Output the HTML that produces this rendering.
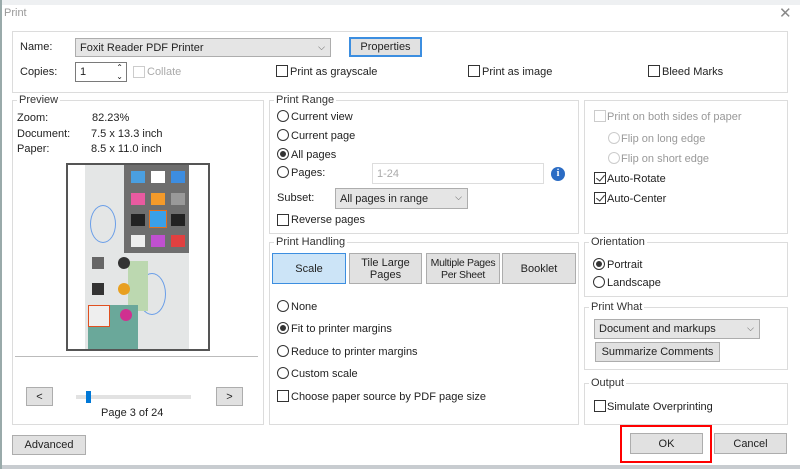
<!DOCTYPE html>
<html><head><style>
*{box-sizing:border-box;margin:0;padding:0}
body{width:800px;height:469px;overflow:hidden;background:#fff;font-family:"Liberation Sans",sans-serif;font-size:11px;color:#222;position:relative}
.a{position:absolute;white-space:nowrap}
.g{position:absolute;border:1px solid #dcdcdc}
.gl{position:absolute;background:#fff;padding:0 2px;font-size:11px;color:#333}
.btn{position:absolute;background:#e1e1e1;border:1px solid #adadad;text-align:center;font-size:11px;color:#222;display:flex;align-items:center;justify-content:center;line-height:12px;white-space:nowrap}
.cb{position:absolute;width:12px;height:12px;border:1px solid #333;background:#fff}
.rb{position:absolute;width:12px;height:12px;border:1px solid #333;border-radius:50%;background:#fff}
.rb.on::after{content:"";position:absolute;left:2px;top:2px;width:6px;height:6px;border-radius:50%;background:#333}
.dis{border-color:#ccc;color:#aaa}
.cmb{position:absolute;background:#e5e5e5;border:1px solid #adadad;padding-left:4px;display:flex;align-items:center}
.chev{position:absolute;right:5px;top:3px;font-size:9px;color:#555}
.chk::after{content:"";position:absolute;left:3px;top:0px;width:4px;height:7px;border:solid #333;border-width:0 1.5px 1.5px 0;transform:rotate(40deg)}
</style></head><body>
<div class="a" style="left:0;top:0;width:800px;height:5px;background:#eef0f2"></div>
<div class="a" style="left:0;top:465px;width:800px;height:4px;background:#c8ccd0"></div>
<div class="a" style="left:0;top:0;width:2px;height:469px;background:#9aa"></div>
<div class="a" style="left:4px;top:7px;color:#999">Print</div>
<div class="a" style="left:779px;top:4px;font-size:15px;color:#888">✕</div>

<div class="g" style="left:12px;top:31px;width:776px;height:62px"></div>
<div class="a" style="left:20px;top:41px">Name:</div>
<div class="cmb" style="left:75px;top:38px;width:256px;height:19px">Foxit Reader PDF Printer<span class="chev">⌵</span></div>
<div class="btn" style="left:349px;top:37px;width:73px;height:20px;border:2px solid #3c8ee0">Properties</div>
<div class="a" style="left:20px;top:66px">Copies:</div>
<div class="a" style="left:75px;top:62px;width:52px;height:20px;border:1px solid #7a7a7a;padding:3px 4px">1<span style="position:absolute;right:3px;top:0;font-size:8px;line-height:9px">⌃<br>⌄</span></div>
<div class="cb dis" style="left:133px;top:66px"></div><div class="a" style="left:147px;top:66px;color:#aaa">Collate</div>
<div class="cb" style="left:276px;top:65px"></div><div class="a" style="left:290px;top:66px">Print as grayscale</div>
<div class="cb" style="left:468px;top:65px"></div><div class="a" style="left:482px;top:66px">Print as image</div>
<div class="cb" style="left:648px;top:65px"></div><div class="a" style="left:662px;top:66px">Bleed Marks</div>

<div class="g" style="left:12px;top:100px;width:252px;height:325px"></div>
<div class="gl" style="left:17px;top:94px">Preview</div>
<div class="a" style="left:17px;top:112px">Zoom:</div><div class="a" style="left:92px;top:112px">82.23%</div>
<div class="a" style="left:17px;top:128px">Document:</div><div class="a" style="left:91px;top:128px">7.5 x 13.3 inch</div>
<div class="a" style="left:17px;top:143px">Paper:</div><div class="a" style="left:91px;top:143px">8.5 x 11.0 inch</div>
<div class="a" style="left:66px;top:163px;width:144px;height:188px;border:2px solid #555;background:#fff;overflow:hidden">
 <div class="a" style="left:17px;top:0;width:104px;height:186px;background:#e4e6e6"></div>
 <div class="a" style="left:56px;top:0;width:65px;height:88px;background:#6e6e6e"></div>
 <div class="a" style="left:63px;top:6px;width:14px;height:12px;background:#4a9fe0"></div>
 <div class="a" style="left:83px;top:6px;width:14px;height:12px;background:#fff"></div>
 <div class="a" style="left:103px;top:6px;width:14px;height:12px;background:#3d8de0"></div>
 <div class="a" style="left:63px;top:28px;width:14px;height:12px;background:#e95aa0"></div>
 <div class="a" style="left:83px;top:28px;width:14px;height:12px;background:#f39a2a"></div>
 <div class="a" style="left:103px;top:28px;width:14px;height:12px;background:#999"></div>
 <div class="a" style="left:63px;top:49px;width:14px;height:12px;background:#222"></div>
 <div class="a" style="left:81px;top:45px;width:18px;height:18px;border:1px solid #e07020;background:#3aa0e8"></div>
 <div class="a" style="left:103px;top:49px;width:14px;height:12px;background:#222"></div>
 <div class="a" style="left:63px;top:70px;width:14px;height:12px;background:#eee"></div>
 <div class="a" style="left:83px;top:70px;width:14px;height:12px;background:#c050d0"></div>
 <div class="a" style="left:103px;top:70px;width:14px;height:12px;background:#e04040"></div>
 <div class="a" style="left:22px;top:40px;width:26px;height:38px;border:1px solid #6a9ee8;border-radius:50%"></div>
 <div class="a" style="left:70px;top:108px;width:28px;height:42px;border:1px solid #6a9ee8;border-radius:50%"></div>
 <div class="a" style="left:60px;top:96px;width:20px;height:50px;background:#bcd8b0"></div>
 <div class="a" style="left:20px;top:140px;width:50px;height:46px;background:#6aa89a"></div>
 <div class="a" style="left:20px;top:140px;width:22px;height:22px;border:1px solid #e05020;background:#eee"></div>
 <div class="a" style="left:52px;top:144px;width:12px;height:12px;border-radius:50%;background:#d03090"></div>
 <div class="a" style="left:24px;top:118px;width:12px;height:12px;background:#333"></div>
 <div class="a" style="left:50px;top:118px;width:12px;height:12px;border-radius:50%;background:#e8a020"></div>
 <div class="a" style="left:24px;top:92px;width:12px;height:12px;background:#666"></div>
 <div class="a" style="left:50px;top:92px;width:12px;height:12px;border-radius:50%;background:#333"></div>
</div>
<div class="a" style="left:15px;top:356px;width:243px;height:1px;background:#bbb"></div>
<div class="btn" style="left:26px;top:387px;width:27px;height:19px">&lt;</div>
<div class="btn" style="left:216px;top:387px;width:27px;height:19px">&gt;</div>
<div class="a" style="left:76px;top:395px;width:115px;height:4px;background:#e2e2e2"></div>
<div class="a" style="left:86px;top:391px;width:5px;height:12px;background:#0078d7"></div>
<div class="a" style="left:101px;top:407px">Page 3 of 24</div>
<div class="btn" style="left:12px;top:435px;width:74px;height:20px">Advanced</div>

<div class="g" style="left:269px;top:100px;width:310px;height:134px"></div>
<div class="gl" style="left:274px;top:94px">Print Range</div>
<div class="rb" style="left:277px;top:110px"></div><div class="a" style="left:291px;top:111px">Current view</div>
<div class="rb" style="left:277px;top:129px"></div><div class="a" style="left:291px;top:130px">Current page</div>
<div class="rb on" style="left:277px;top:148px"></div><div class="a" style="left:291px;top:149px">All pages</div>
<div class="rb" style="left:277px;top:166px"></div><div class="a" style="left:291px;top:167px">Pages:</div>
<div class="a" style="left:372px;top:163px;width:172px;height:21px;border:1px solid #ddd;padding:4px 4px;color:#aaa">1-24</div>
<div class="a" style="left:551px;top:167px;width:14px;height:14px;border-radius:50%;background:#2b6cc4;color:#fff;font-weight:bold;font-size:10px;text-align:center;line-height:14px;font-family:'Liberation Serif',serif">i</div>
<div class="a" style="left:277px;top:192px">Subset:</div>
<div class="cmb" style="left:335px;top:188px;width:133px;height:21px">All pages in range<span class="chev">⌵</span></div>
<div class="cb" style="left:277px;top:214px"></div><div class="a" style="left:291px;top:214px">Reverse pages</div>

<div class="g" style="left:269px;top:242px;width:310px;height:183px"></div>
<div class="gl" style="left:274px;top:236px">Print Handling</div>
<div class="btn" style="left:272px;top:253px;width:74px;height:31px;background:#cce4f7;border:1px solid #3c8ee0">Scale</div>
<div class="btn" style="left:349px;top:253px;width:73px;height:31px">Tile Large<br>Pages</div>
<div class="btn" style="left:426px;top:253px;width:74px;height:31px;font-size:10.5px;letter-spacing:-0.3px">Multiple Pages<br>Per Sheet</div>
<div class="btn" style="left:502px;top:253px;width:74px;height:31px">Booklet</div>
<div class="rb" style="left:277px;top:300px"></div><div class="a" style="left:291px;top:301px">None</div>
<div class="rb on" style="left:277px;top:322px"></div><div class="a" style="left:291px;top:323px">Fit to printer margins</div>
<div class="rb" style="left:277px;top:345px"></div><div class="a" style="left:291px;top:346px">Reduce to printer margins</div>
<div class="rb" style="left:277px;top:367px"></div><div class="a" style="left:291px;top:368px">Custom scale</div>
<div class="cb" style="left:277px;top:390px"></div><div class="a" style="left:291px;top:391px">Choose paper source by PDF page size</div>

<div class="g" style="left:584px;top:100px;width:204px;height:134px"></div>
<div class="cb dis" style="left:594px;top:110px"></div><div class="a" style="left:607px;top:111px;color:#999">Print on both sides of paper</div>
<div class="rb dis" style="left:608px;top:132px"></div><div class="a" style="left:621px;top:133px;color:#999">Flip on long edge</div>
<div class="rb dis" style="left:608px;top:152px"></div><div class="a" style="left:621px;top:153px;color:#999">Flip on short edge</div>
<div class="cb chk" style="left:594px;top:172px"></div><div class="a" style="left:607px;top:173px">Auto-Rotate</div>
<div class="cb chk" style="left:594px;top:192px"></div><div class="a" style="left:607px;top:193px">Auto-Center</div>

<div class="g" style="left:584px;top:242px;width:204px;height:55px"></div>
<div class="gl" style="left:589px;top:236px">Orientation</div>
<div class="rb on" style="left:593px;top:258px"></div><div class="a" style="left:607px;top:259px">Portrait</div>
<div class="rb" style="left:593px;top:276px"></div><div class="a" style="left:607px;top:277px">Landscape</div>

<div class="g" style="left:584px;top:307px;width:204px;height:63px"></div>
<div class="gl" style="left:589px;top:301px">Print What</div>
<div class="cmb" style="left:594px;top:319px;width:166px;height:20px">Document and markups<span class="chev">⌵</span></div>
<div class="btn" style="left:595px;top:342px;width:125px;height:20px">Summarize Comments</div>

<div class="g" style="left:584px;top:383px;width:204px;height:42px"></div>
<div class="gl" style="left:589px;top:377px">Output</div>
<div class="cb" style="left:594px;top:400px"></div><div class="a" style="left:607px;top:401px">Simulate Overprinting</div>

<div class="btn" style="left:630px;top:433px;width:73px;height:21px">OK</div>
<div class="a" style="left:620px;top:425px;width:92px;height:38px;border:2.5px solid #f00"></div>
<div class="btn" style="left:714px;top:433px;width:73px;height:21px">Cancel</div>
</body></html>
